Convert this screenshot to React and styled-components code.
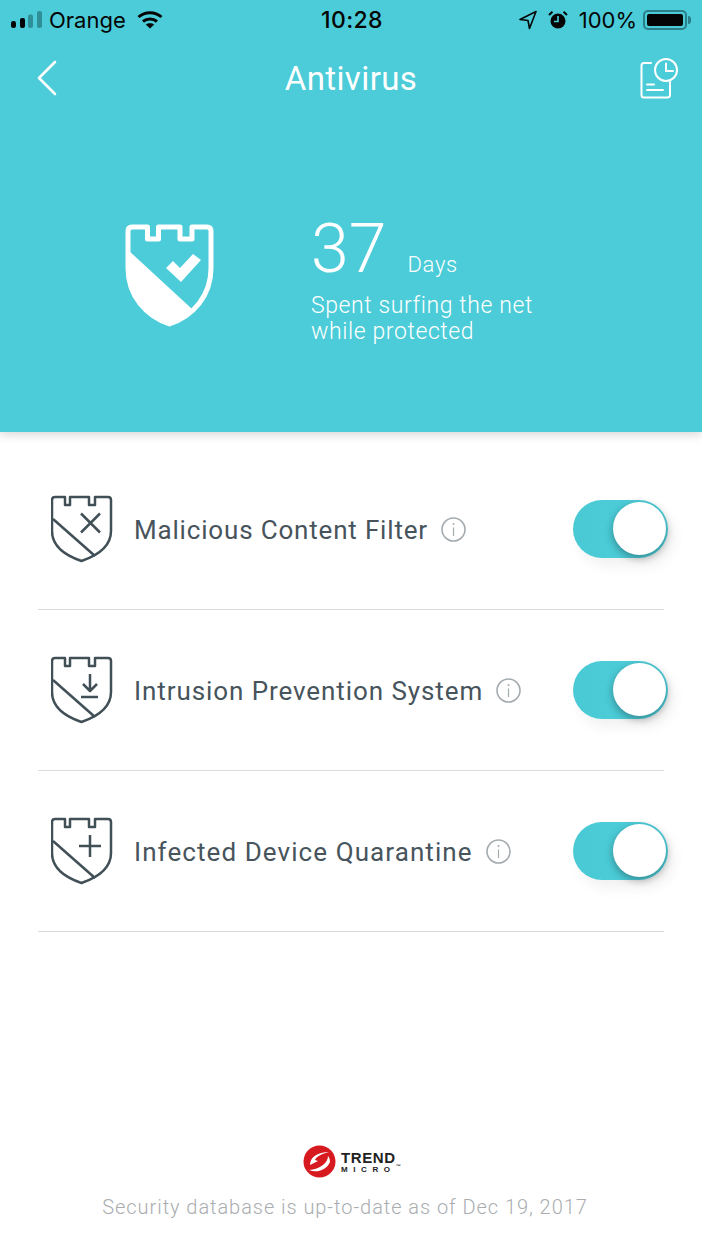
import React from 'react';
import styled, { createGlobalStyle } from 'styled-components';

const features = [
  { name: 'Malicious Content Filter', mark: 'cross', tracking: 0.82 },
  { name: 'Intrusion Prevention System', mark: 'download', tracking: 0.92 },
  { name: 'Infected Device Quarantine', mark: 'plus', tracking: 1.08 },
];

function ShieldMark({ mark }) {
  if (mark === 'cross') return <path d="M30 18.500L49 37.500M49 18.500L30 37.500" />;
  if (mark === 'download') return <path d="M39 18V34M32 28L39 35L46 28M30 41H47" />;
  return <path d="M39 18V40M28 29H50" />;
}

function FeatureShield({ mark }) {
  return (
    <ShieldSvg viewBox="0 0 62 68" fill="none" stroke="#414f57" strokeWidth="2.5" strokeLinejoin="round">
      <path d="M4 2H14V10H19V2H38V10H44V2H57Q60 2 60 5V36C60 50 48 60 30.5 66C13 60 1 50 1 36V5Q1 2 4 2Z" />
      <path d="M2 24L44 61" />
      <ShieldMark mark={mark} />
    </ShieldSvg>
  );
}

function InfoIcon() {
  return (
    <InfoSvg viewBox="0 0 25 25" fill="none" stroke="#a4abaf" strokeWidth="1.6">
      <circle cx="12.500" cy="12.500" r="11.500" />
      <path d="M12.500 10.500V19" strokeWidth="1.2" />
      <circle cx="12.500" cy="7" r="1" fill="#a4abaf" stroke="none" />
    </InfoSvg>
  );
}

export default function App() {
  return (
    <Page>
      <GlobalStyle />
      <Header>
        <StatusBar>
          <StatusLeft>
            <svg width="32" height="20" viewBox="0 0 32 20">
              <rect x="0" y="11" width="5" height="7" rx="2.2" fill="#050505" />
              <rect x="9" y="8" width="5" height="10" rx="2" fill="#050505" />
              <rect x="17" y="4.5" width="5" height="13.5" rx="2" fill="#2f8f99" />
              <rect x="26" y="1" width="5" height="17" rx="2" fill="#2f8f99" />
            </svg>
            <span>Orange</span>
            <WifiSvg viewBox="0 0 26 20" fill="none" stroke="#050505" strokeWidth="3">
              <path d="M1.5 7C8 1.2 18 1.2 24.5 7" />
              <path d="M6 11.5C10 8 16 8 20 11.5" />
              <path d="M13 18.5L8.8 14.6C11 12.8 15 12.8 17.2 14.6Z" fill="#050505" stroke="none" />
            </WifiSvg>
          </StatusLeft>
          <Clock>10:28</Clock>
          <StatusRight>
            <svg width="18" height="20" viewBox="0 0 18 20" fill="none" stroke="#050505" strokeWidth="1.6" strokeLinejoin="round">
              <path d="M17 1.5L1 9.5L9 10.5L10.5 18.5Z" />
            </svg>
            <svg width="20" height="20" viewBox="0 0 20 20">
              <circle cx="10" cy="11" r="7.5" fill="#050505" />
              <path d="M10 6V11.5H6" fill="none" stroke="#4bccd8" strokeWidth="1.6" />
              <path d="M1 5L4.5 1.8M19 5L15.5 1.8" stroke="#050505" strokeWidth="2" />
            </svg>
            <span>100%</span>
            <Battery><BatteryFill /></Battery>
          </StatusRight>
        </StatusBar>
        <NavBar>
          <svg width="26" height="36" viewBox="0 0 26 36" fill="none" stroke="#fff" strokeWidth="2.6" strokeLinecap="round" strokeLinejoin="round">
            <path d="M19 2L3 18L19 34" />
          </svg>
          <Title>Antivirus</Title>
          <svg width="38" height="42" viewBox="0 0 38 42" fill="none" stroke="#fff" strokeWidth="2" strokeLinecap="round">
            <path d="M11 6H4Q1.5 6 1.5 8.5V38Q1.5 40.500 4 40.500H27Q30 40.500 30 38V25" />
            <circle cx="26" cy="13" r="11" />
            <path d="M26 6.500V14H33M7 27.500H14M7 33H23" />
          </svg>
        </NavBar>
        <Hero>
          <svg width="90" height="103" viewBox="0 0 90 103">
            <path d="M7 3H22.500V15H33.500V3H55V15H67V3H82Q86 3 86 7V44C86 72 68 92 44.500 100C21 92 3 72 3 44V7Q3 3 7 3Z" fill="none" stroke="#fff" strokeWidth="5" strokeLinejoin="round" />
            <path d="M3 28L66 86C60 92 52 97 44.500 100C21 92 3 72 3 44Z" fill="#fff" stroke="#fff" strokeWidth="3" strokeLinejoin="round" />
            <path d="M41 44L48 37L55 44L68 30L76 36L56 58Z" fill="#fff" />
          </svg>
          <HeroText>
            <DaysRow>
              <DaysCount>37</DaysCount>
              <DaysLabel>Days</DaysLabel>
            </DaysRow>
            <HeroCaption>Spent surfing the net<br />while protected</HeroCaption>
          </HeroText>
        </Hero>
      </Header>
      <FeatureList>
        {features.map((f) => (
          <FeatureRow key={f.name}>
            <FeatureShield mark={f.mark} />
            <FeatureName $tracking={f.tracking}>{f.name}</FeatureName>
            <InfoIcon />
            <Toggle><Knob /></Toggle>
          </FeatureRow>
        ))}
      </FeatureList>
      <Footer>
        <Logo>
          <svg width="33" height="33" viewBox="0 0 33 33">
            <circle cx="16.500" cy="16.500" r="16" fill="#d71920" />
            <path d="M7 20C7 12 15 7 26 7C19 9 14 11 12 15L15 16L7 20Z" fill="#fff" />
            <path d="M6 25C13 28 23 26 27 17C27 14 26 12 25 11C25 18 17 24 6 25Z" fill="#fff" />
          </svg>
          <LogoText>
            <LogoTrend>TREND</LogoTrend>
            <LogoMicro>MICRO<LogoMark>™</LogoMark></LogoMicro>
          </LogoText>
        </Logo>
        <FooterNote>Security database is up-to-date as of Dec 19, 2017</FooterNote>
      </Footer>
    </Page>
  );
}

const GlobalStyle = createGlobalStyle`
body {
  margin: 0;
  background: #fff;
  font-family: Roboto, "Liberation Sans", sans-serif;
}
`;

const Page = styled.div`
width: 702px;
height: 1249px;
display: flex;
flex-direction: column;
overflow: hidden;
background: #fff;
`;

const Header = styled.header`
height: 432px;
flex-shrink: 0;
background: #4bccd8;
box-shadow: 0 2px 10px rgba(0,0,0,0.18);
position: relative;
`;

const StatusBar = styled.div`
height: 40px;
padding: 0 11px 0 11px;
display: grid;
grid-template-columns: 1fr auto 1fr;
align-items: center;
color: #050505;
font-family: Inter, sans-serif;
font-size: 22px;
`;

const StatusLeft = styled.div`
display: flex;
align-items: center;
gap: 6px;
`;

const WifiSvg = styled.svg`
width: 26px;
height: 20px;
margin-left: 5px;
`;

const Clock = styled.div`
font-weight: 500;
font-size: 23px;
letter-spacing: 0.4px;
margin-left: 2px;
`;

const StatusRight = styled.div`
display: flex;
align-items: center;
justify-content: flex-end;
gap: 11px;
`;

const Battery = styled.div`
width: 44px;
height: 20px;
margin-right: 4px;
box-sizing: border-box;
border: 2px solid #2b7f89;
border-radius: 5px;
padding: 2px;
margin-left: -5px;
position: relative;
&::after {
  content: '';
  position: absolute;
  right: -6px;
  top: 4px;
  width: 3px;
  height: 8px;
  background: #2b7f89;
  border-radius: 0 3px 3px 0;
}
`;

const BatteryFill = styled.div`
height: 100%;
background: #050505;
border-radius: 2px;
`;

const NavBar = styled.div`
height: 76px;
padding: 0 24px 0 36px;
display: flex;
align-items: center;
justify-content: space-between;
`;

const Title = styled.h1`
margin: 0;
color: #fff;
font-size: 33px;
font-weight: 400;
letter-spacing: 0.4px;
`;

const Hero = styled.div`
margin-top: 108px;
padding-left: 125px;
display: flex;
align-items: flex-start;
gap: 96px;
`;

const HeroText = styled.div`
margin-top: -7px;
color: #fff;
`;

const DaysRow = styled.div`
display: flex;
align-items: baseline;
gap: 21px;
`;

const DaysCount = styled.div`
font-size: 68px;
font-weight: 300;
line-height: 64px;
`;

const DaysLabel = styled.div`
font-size: 22px;
font-weight: 300;
letter-spacing: 0.7px;
`;

const HeroCaption = styled.div`
margin-top: 12px;
font-size: 23px;
font-weight: 300;
line-height: 26px;
letter-spacing: 0.6px;
`;

const FeatureList = styled.div`
margin: 17px 38px 0;
`;

const FeatureRow = styled.div`
height: 161px;
box-sizing: border-box;
padding: 0 0 0 13px;
border-bottom: 1px solid #d9dcde;
display: flex;
align-items: center;
`;

const ShieldSvg = styled.svg`
width: 62px;
height: 68px;
flex-shrink: 0;
`;

const FeatureName = styled.div`
margin-left: 21px;
padding-top: 2px;
font-size: 26px;
color: #47545c;
letter-spacing: ${(p) => p.$tracking}px;
`;

const InfoSvg = styled.svg`
width: 25px;
height: 25px;
margin-left: 13px;
flex-shrink: 0;
`;

const Toggle = styled.div`
width: 95px;
height: 58px;
margin: 0 -4px 0 auto;
box-sizing: border-box;
padding: 2px;
border-radius: 29px;
background: linear-gradient(90deg, #48c9d4, #4fd0dc);
box-shadow: 6px 8px 14px rgba(0,0,0,0.06);
display: flex;
justify-content: flex-end;
`;

const Knob = styled.div`
width: 53px;
height: 53px;
border-radius: 50%;
background: #fff;
box-shadow: 0 3px 8px rgba(0,0,0,0.35);
`;

const Footer = styled.footer`
margin-top: auto;
padding-bottom: 30px;
display: flex;
flex-direction: column;
align-items: center;
`;

const Logo = styled.div`
display: flex;
align-items: center;
gap: 5px;
margin-bottom: 1px;
`;

const LogoText = styled.div`
width: 58px;
display: flex;
flex-direction: column;
font-family: "Liberation Sans", sans-serif;
font-weight: 700;
color: #222;
`;

const LogoTrend = styled.span`
font-size: 15px;
line-height: 15px;
letter-spacing: 0.6px;
`;

const LogoMicro = styled.span`
font-size: 8px;
line-height: 9px;
letter-spacing: 5.6px;
white-space: nowrap;
`;

const LogoMark = styled.sup`
font-size: 5px;
line-height: 0;
letter-spacing: 0;
`;

const FooterNote = styled.div`
margin-top: 16px;
margin-right: 12px;
font-size: 20px;
font-weight: 300;
color: #a9adb0;
letter-spacing: 0.95px;
`;
